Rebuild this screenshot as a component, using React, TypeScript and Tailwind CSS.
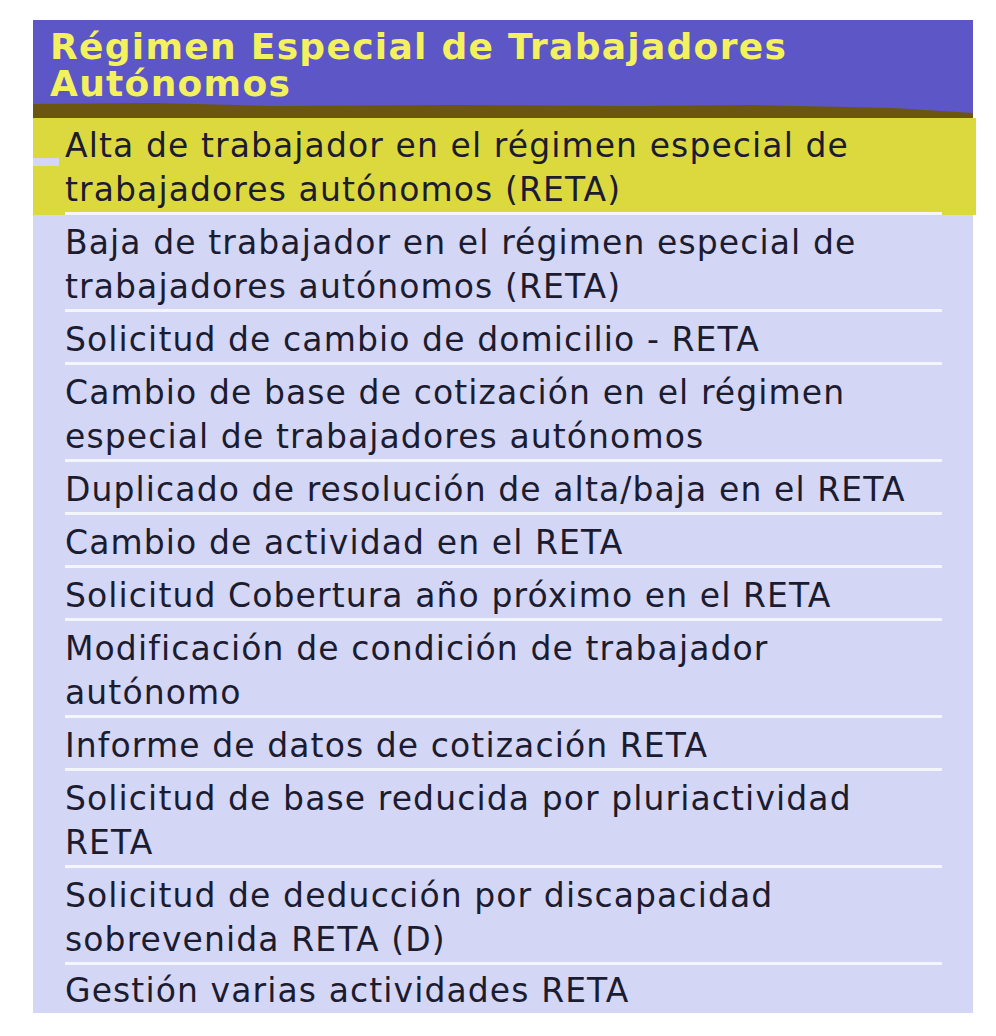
const items: string[][] = [
  ["Alta de trabajador en el régimen especial de", "trabajadores autónomos (RETA)"],
  ["Baja de trabajador en el régimen especial de", "trabajadores autónomos (RETA)"],
  ["Solicitud de cambio de domicilio - RETA"],
  ["Cambio de base de cotización en el régimen", "especial de trabajadores autónomos"],
  ["Duplicado de resolución de alta/baja en el RETA"],
  ["Cambio de actividad en el RETA"],
  ["Solicitud Cobertura año próximo en el RETA"],
  ["Modificación de condición de trabajador", "autónomo"],
  ["Informe de datos de cotización RETA"],
  ["Solicitud de base reducida por pluriactividad", "RETA"],
  ["Solicitud de deducción por discapacidad", "sobrevenida RETA (D)"],
  ["Gestión varias actividades RETA"],
];

export default function App() {
  return (
    <div className="min-h-[1036px] bg-white pt-[20px] pl-[33px]" style={{ fontFamily: '"DejaVu Sans", Verdana, sans-serif' }}>
      <div className="w-[940px] bg-[#d4d6f5]">
        <div className="relative bg-[#5c56c7] pl-[17px] pt-[8px] pb-[16px]">
          <h2 className="text-[36px] leading-[37px] font-bold tracking-[1.3px] text-[#f3f25e]">
            Régimen Especial de Trabajadores
            <br />
            Autónomos
          </h2>
          {/* highlighter stroke bleeding over the header */}
          <svg className="absolute left-0 bottom-0" width="940" height="16" viewBox="0 0 940 16" preserveAspectRatio="none">
            <path d="M0 2 L120 1 L240 4 L420 3 L600 4 L720 3 L860 6 L940 11 L940 16 L0 16 Z" fill="#6a5611" />
          </svg>
        </div>
        <ul>
          {items.map((lines, i) => (
            <li
              key={i}
              className={i === 0 ? "relative bg-[#dcd93f] pl-[32px] -mr-[3px] pr-[34px]" : "pl-[32px] pr-[31px]"}
            >
              {i === 0 && <div className="absolute left-0 top-[40px] w-[26px] h-[8px] bg-[#d4d6f5]" />}
              <div
                className={
                  i === items.length - 1
                    ? "pt-[4px] text-[33px] leading-[44px] tracking-[1.1px] text-[#1c1c30]"
                    : "pt-[6px] border-b-[3px] border-[#f4f5fd] text-[33px] leading-[44px] tracking-[1.1px] text-[#1c1c30]"
                }
              >
                {lines.map((l, j) => (
                  <div key={j} className="whitespace-nowrap">
                    {l}
                  </div>
                ))}
              </div>
            </li>
          ))}
        </ul>
      </div>
    </div>
  );
}
